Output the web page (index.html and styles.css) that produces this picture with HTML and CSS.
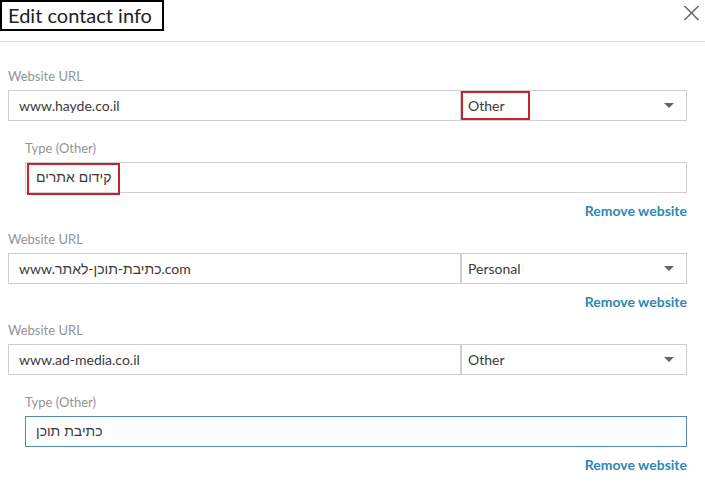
FILE: index.html
```html
<!DOCTYPE html>
<html lang="en">
<head>
<meta charset="utf-8">
<title>Edit contact info</title>
<link rel="stylesheet" href="styles.css">
</head>
<body>
<div class="dialog">
  <header class="head">
    <h1 class="title">Edit contact info</h1>
    <button class="close" type="button" aria-label="Close">
      <svg width="17" height="16" viewBox="0 0 17 16"><path d="M1.5 1 L15.5 15 M15.5 1 L1.5 15" stroke="#6b6b6b" stroke-width="1.6" fill="none"/></svg>
    </button>
  </header>
  <form class="form">
    <section class="site">
      <div class="lbl">Website URL</div>
      <div class="row">
        <div class="field url">www.hayde.co.il</div>
        <div class="field select"><span class="val">Other</span><span class="caret"></span><span class="mark mark-sel"></span></div>
      </div>
      <div class="sub">
        <div class="lbl">Type (Other)</div>
        <div class="field type"><span>קידום אתרים</span><span class="mark mark-type"></span></div>
      </div>
      <div class="remove"><a href="#">Remove website</a></div>
    </section>
    <section class="site">
      <div class="lbl">Website URL</div>
      <div class="row">
        <div class="field url">www.כתיבת-תוכן-לאתר.com</div>
        <div class="field select"><span class="val">Personal</span><span class="caret"></span></div>
      </div>
      <div class="remove"><a href="#">Remove website</a></div>
    </section>
    <section class="site">
      <div class="lbl">Website URL</div>
      <div class="row">
        <div class="field url">www.ad-media.co.il</div>
        <div class="field select"><span class="val">Other</span><span class="caret"></span></div>
      </div>
      <div class="sub">
        <div class="lbl">Type (Other)</div>
        <div class="field type focus"><span>כתיבת תוכן</span></div>
      </div>
      <div class="remove"><a href="#">Remove website</a></div>
    </section>
  </form>
</div>
</body>
</html>
```
FILE: styles.css
```css
* { box-sizing: border-box; }
html, body { margin: 0; padding: 0; background: #fff; }
body {
  font-family: Lato, "Liberation Sans", "Noto Sans", sans-serif;
  color: #333;
}
.dialog { width: 705px; height: 487px; overflow: hidden; }

.head {
  height: 42px;
  border-bottom: 1px solid #dcdcdc;
  display: flex;
  justify-content: space-between;
  align-items: flex-start;
}
.title {
  margin: 0;
  font-size: 20px;
  font-weight: 400;
  line-height: 27px;
  color: #222;
  border: 2px solid #000;
  padding: 0 10px 0 6px;
}
.close {
  margin: 5px 5px 0 0;
  padding: 0;
  border: 0;
  background: none;
  width: 17px;
  height: 16px;
  display: block;
}
.close svg { display: block; }

.form { padding: 26px 18px 0 8px; }
.site + .site { margin-top: 12px; }

.lbl {
  font-size: 13px;
  line-height: 16px;
  color: #949494;
  margin-bottom: 6px;
}
.row { display: flex; }
.field {
  position: relative;
  height: 31px;
  border: 1px solid #cfcfcf;
  font-size: 14px;
  line-height: 29px;
  color: #3a3a3a;
  padding: 0 10px;
  white-space: nowrap;
}
.url { flex: 1; }
.select {
  width: 226px;
  padding: 0 12px 0 6px;
  display: flex;
  justify-content: space-between;
  align-items: center;
}
.caret {
  width: 0;
  height: 0;
  border-left: 5px solid transparent;
  border-right: 5px solid transparent;
  border-top: 5px solid #666;
}
.sub { margin: 19px 0 0 17px; }
.type { font-family: "Liberation Sans", Arial, sans-serif; }
.focus { border-color: #4f8db2; }

.mark {
  position: absolute;
  border: 2px solid #c8232c;
}
.mark-sel { left: -1px; top: 0; width: 69px; height: 29px; }
.mark-type { left: 1px; top: 0; width: 93px; height: 32px; }

.remove {
  margin-top: 10px;
  text-align: right;
  font-size: 14px;
  line-height: 16px;
  font-weight: 700;
}
.remove a { color: #2f87b3; text-decoration: none; }
```
